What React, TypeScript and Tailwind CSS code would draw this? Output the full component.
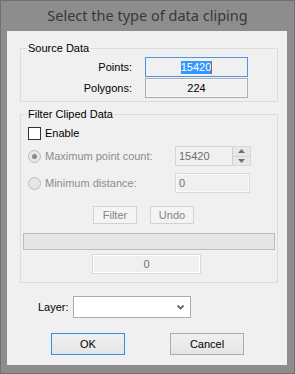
import React from "react";

const FONT = { fontFamily: '"Liberation Sans", Arial, sans-serif' };

function Radio({ checked }: { checked?: boolean }) {
  return (
    <span className="flex h-[13px] w-[13px] items-center justify-center rounded-full border border-[#bcbcbc] bg-[#e6e6e6]">
      {checked && <span className="h-[5px] w-[5px] rounded-full bg-[#8a8a8a]" />}
    </span>
  );
}

function Spinner() {
  return (
    <div className="flex h-full w-[18px] flex-col border-l border-[#cfcfcf] bg-[#e8e8e8]">
      <div className="flex flex-1 items-center justify-center border-b border-[#d4d4d4]">
        <svg width="7" height="4" viewBox="0 0 7 4">
          <path d="M3.5 0 L7 4 L0 4 Z" fill="#707070" />
        </svg>
      </div>
      <div className="flex flex-1 items-center justify-center">
        <svg width="7" height="4" viewBox="0 0 7 4">
          <path d="M0 0 L7 0 L3.5 4 Z" fill="#707070" />
        </svg>
      </div>
    </div>
  );
}

export default function App() {
  return (
    <div
      className="flex h-[374px] w-[295px] flex-col border border-[#707070] bg-[#8d8d8d] text-[11px] text-black"
      style={FONT}
    >
      <div
        className="flex h-[30px] items-center justify-center text-[14.5px] text-[#383838]"
        style={{ fontFamily: '"Noto Sans", "Open Sans", sans-serif' }}
      >
        Select the type of data cliping
      </div>

      <div className="ml-[6px] flex h-[334px] w-[280px] flex-col bg-[#f0f0f0]">
        {/* Source Data */}
        <fieldset className="ml-[13px] mt-[10px] w-[258px] border border-[#dcdcdc] pb-[3px] pt-[2px]">
          <legend className="ml-[6px] px-[1px] leading-[14px]">Source Data</legend>
          <div className="flex flex-col gap-[1px]">
            <div className="flex items-center">
              <span className="w-[111px] text-right">Points:</span>
              <div className="ml-[13px] flex h-[20px] w-[103px] items-center justify-center border border-[#4d95e4] bg-[#f0f0f0]">
                <span className="bg-[#3399ff] leading-[13px] text-white">15420</span>
                <span className="h-[13px] w-[1px] bg-[#c05a10]" />
              </div>
            </div>
            <div className="flex items-center">
              <span className="w-[111px] text-right">Polygons:</span>
              <div className="ml-[13px] flex h-[20px] w-[103px] items-center justify-center border border-[#acacac] bg-[#f0f0f0] shadow-[inset_0_0_0_1px_#f8f8f8]">
                224
              </div>
            </div>
          </div>
        </fieldset>

        {/* Filter Cliped Data */}
        <fieldset className="ml-[13px] mt-[5px] w-[258px] border border-[#dcdcdc] pb-[8px] pt-[6px]">
          <legend className="ml-[6px] px-[1px] leading-[14px]">Filter Cliped Data</legend>

          <div className="ml-[7px] flex h-[13px] items-center gap-[4px]">
            <span className="h-[13px] w-[13px] border border-[#333333] bg-white" />
            <span>Enable</span>
          </div>

          <div className="mt-[6px] flex h-[20px] items-center text-[#8d8d8d]">
            <div className="flex w-[154px] items-center gap-[4px] pl-[7px]">
              <Radio checked />
              <span>Maximum point count:</span>
            </div>
            <div className="flex h-[20px] w-[76px] items-stretch border border-[#d6d6d6] bg-[#f0f0f0]">
              <span className="flex flex-1 items-center pl-[3px] text-[#6d6d6d]">15420</span>
              <Spinner />
            </div>
          </div>

          <div className="mt-[7px] flex h-[20px] items-center text-[#8d8d8d]">
            <div className="flex w-[154px] items-center gap-[4px] pl-[7px]">
              <Radio />
              <span>Minimum distance:</span>
            </div>
            <div className="flex h-[20px] w-[75px] items-center border border-[#d9d9d9] bg-[#f0f0f0] pl-[3px] text-[#6d6d6d] shadow-[inset_0_0_0_1px_#fafafa]">
              0
            </div>
          </div>

          <div className="mt-[13px] flex gap-[13px] pl-[72px] text-[#838383]">
            <button className="flex h-[18px] w-[44px] items-center justify-center border border-[#d2d2d2] bg-[#f4f4f4]">
              Filter
            </button>
            <button className="flex h-[18px] w-[44px] items-center justify-center border border-[#d2d2d2] bg-[#f4f4f4]">
              Undo
            </button>
          </div>

          <div className="ml-[2px] mt-[9px] h-[17px] w-[252px] border border-[#bcbcbc] bg-[#e6e6e6]" />

          <div className="ml-[71px] mt-[4px] flex h-[20px] w-[109px] items-center justify-center border border-[#dadada] text-[#6d6d6d] shadow-[inset_0_0_0_1px_#ffffff]">
            0
          </div>
        </fieldset>

        {/* Layer */}
        <div className="mt-[13px] flex items-center pl-[31px]">
          <span className="w-[35px]">Layer:</span>
          <div className="flex h-[22px] w-[118px] items-center justify-end border border-[#acacac] bg-white pr-[6px]">
            <svg width="7" height="5" viewBox="0 0 7 5">
              <path d="M0.5 0.5 L3.5 3.5 L6.5 0.5" fill="none" stroke="#555555" strokeWidth="1.6" />
            </svg>
          </div>
        </div>

        {/* Buttons */}
        <div className="mt-[15px] flex gap-[45px] pl-[44px]">
          <button className="flex h-[22px] w-[74px] items-center justify-center border border-[#3c8ee2] bg-gradient-to-b from-[#f0f0f0] to-[#e5e5e5]">
            OK
          </button>
          <button className="flex h-[22px] w-[74px] items-center justify-center border border-[#acacac] bg-gradient-to-b from-[#f0f0f0] to-[#e5e5e5]">
            Cancel
          </button>
        </div>
      </div>
    </div>
  );
}
